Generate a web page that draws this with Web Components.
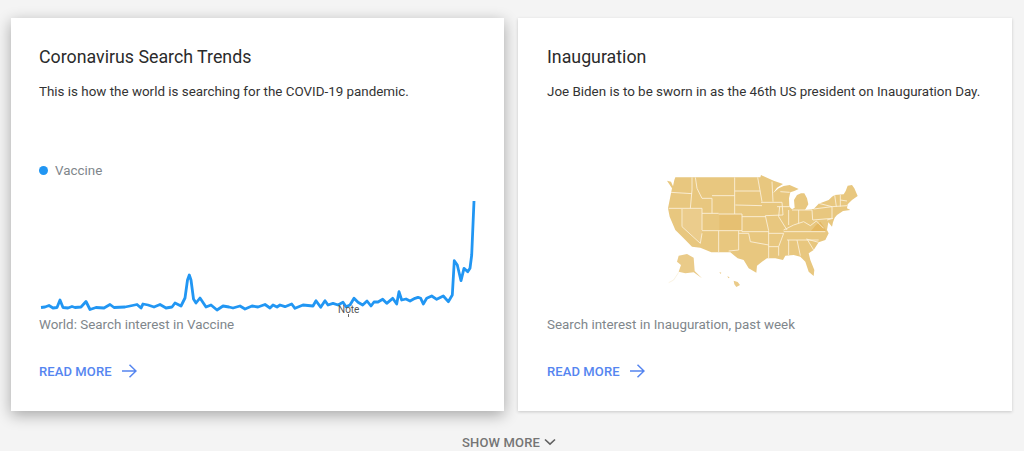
<!DOCTYPE html>
<html lang="en">
<head>
<meta charset="utf-8">
<title>Trends</title>
<style>
  html, body { margin: 0; height: 451px; overflow: hidden; background: #f4f4f4; font-family: Roboto, "Liberation Sans", sans-serif; }
</style>
</head>
<body>
<story-page>
  <story-card raised>
    <span slot="title">Coronavirus Search Trends</span>
    <span slot="desc">This is how the world is searching for the COVID-19 pandemic.</span>
    <trend-chart term="Vaccine"></trend-chart>
    <span slot="caption">World: Search interest in Vaccine</span>
  </story-card>
  <story-card>
    <span slot="title">Inauguration</span>
    <span slot="desc">Joe Biden is to be sworn in as the 46th US president on Inauguration Day.</span>
    <us-map></us-map>
    <span slot="caption">Search interest in Inauguration, past week</span>
  </story-card>
</story-page>
<script>
class StoryPage extends HTMLElement {
    constructor() {
        super();
        this.attachShadow({ mode: 'open' });
        this.shadowRoot.innerHTML = `
            <style>
                :host { display: block; padding: 18px 12px 0 11px; }
                .cards { display: grid; grid-template-columns: 493px 494px; column-gap: 14px; }
                .more {
                    display: flex;
                    justify-content: center;
                    align-items: center;
                    gap: 4px;
                    margin-top: 21px;
                    padding-right: 5px;
                    height: 20px;
                    font-size: 13px;
                    font-weight: 500;
                    letter-spacing: 0.15px;
                    color: #757575;
                }
            </style>
            <div class="cards"><slot></slot></div>
            <div class="more">SHOW MORE
                <svg width="12" height="8" viewBox="0 0 12 8"><path d="M1 1.5 6 6.2 11 1.5" fill="none" stroke="#616161" stroke-width="1.6"/></svg>
            </div>
        `;
    }
}
customElements.define('story-page', StoryPage);

class StoryCard extends HTMLElement {
    constructor() {
        super();
        this.attachShadow({ mode: 'open' });
        this.shadowRoot.innerHTML = `
            <style>
                :host {
                    display: flex;
                    flex-direction: column;
                    box-sizing: border-box;
                    height: 393px;
                    padding: 28px 28px 30px 29px;
                    background: #fff;
                    box-shadow: 0 1px 3px rgba(0,0,0,0.18);
                }
                :host([raised]) { padding-left: 28px; box-shadow: 0 4px 14px rgba(0,0,0,0.32); }
                .title { font-size: 17.8px; line-height: 22px; color: #2b2b2b; }
                .desc { margin-top: 14px; font-size: 13.4px; line-height: 20px; color: #333; white-space: nowrap; }
                .visual { flex: 1; min-height: 0; }
                .caption { font-size: 13.4px; line-height: 20px; color: #80868b; }
                .read {
                    display: flex;
                    align-items: center;
                    gap: 10px;
                    margin-top: 26px;
                    height: 20px;
                    font-size: 13px;
                    font-weight: 500;
                    letter-spacing: 0.1px;
                    color: #5585f0;
                }
            </style>
            <div class="title"><slot name="title"></slot></div>
            <div class="desc"><slot name="desc"></slot></div>
            <div class="visual"><slot></slot></div>
            <div class="caption"><slot name="caption"></slot></div>
            <div class="read">READ MORE
                <svg width="15" height="14" viewBox="0 0 15 14"><path d="M0 7H14M7.5 0.7 14 7 7.5 13.3" fill="none" stroke="#5585f0" stroke-width="1.5"/></svg>
            </div>
        `;
    }
}
customElements.define('story-card', StoryCard);

const SERIES = [
    [41,307.5],[45,307],[49,305.5],[53,308],[57,307.5],[60,300],[63,307.5],[68,308],[72,306.5],[75,307.5],
    [81,307],[86,301.5],[90,309.5],[96,307.5],[104,308],[110,304.5],[114,307.5],[125,307],[130,306],[137,304.5],
    [141,308],[143,304],[148,305],[154,307],[160,304.5],[166,308],[172,307],[175,303],[181,306],[185,298],
    [187.5,280],[189.3,275],[191,280],[193.5,299],[196,303],[200,298],[206,307],[211,305],[217,310],[223,306],[229,307],
    [233,308],[240,306],[245,309],[252,306],[258,307],[265,304.5],[270,308],[273,305],[277,307],[280,305],
    [285,306.7],[291.7,304],[295,308.3],[303,305],[313,306],[316,300.7],[320.7,307.3],[325,300.7],[328,305],[333,303.3],
    [338,305],[343,302.3],[346,306.7],[350,305],[354,298.3],[358,302.3],[362.7,305],[367,301],[371,306],[374,302],
    [378,302],[382.7,299.3],[386.7,303.3],[392.7,298.3],[396.7,304],[399,291.7],[401.7,300],[406,299],[410,301],[415,298.3],
    [418,297.3],[420.7,298.3],[423.3,304],[426.7,298.3],[431.7,296],[436.7,299.3],[443.3,296],[448.3,301.7],[452.3,295],
    [454.3,260.7],[457.3,265],[461,280.7],[464,268.3],[467.7,271.7],[470,268.3],[471.7,255],[474,201]
];

class TrendChart extends HTMLElement {
    constructor() {
        super();
        this.attachShadow({ mode: 'open' });
        const pts = SERIES.map(p => p.join(',')).join(' ');
        this.shadowRoot.innerHTML = `
            <style>
                :host { display: block; padding-top: 58px; }
                .legend { display: flex; align-items: center; gap: 7px; height: 20px; font-size: 13.4px; color: #80868b; }
                .dot { width: 9px; height: 9px; border-radius: 50%; background: #2196f3; }
                svg { display: block; overflow: visible; }
                text { font: 10px Roboto, "Liberation Sans", sans-serif; fill: #555; }
            </style>
            <div class="legend"><span class="dot"></span><span>${this.getAttribute('term')}</span></div>
            <svg width="438" height="135" viewBox="39 180 438 135">
                <polyline points="${pts}" fill="none" stroke="#2196f3" stroke-width="2.8" stroke-linejoin="round"/>
                <text x="338" y="313">Note</text>
                <path d="M348.5 314V317" stroke="#666" stroke-width="1"/>
            </svg>
        `;
    }
}
customElements.define('trend-chart', TrendChart);

class UsMap extends HTMLElement {
    constructor() {
        super();
        this.attachShadow({ mode: 'open' });
        this.shadowRoot.innerHTML = `
            <style>
                :host { display: flex; justify-content: center; padding-top: 63px; }
                svg { display: block; }
            </style>
            <svg width="220" height="130" viewBox="17 0 660 390">
                <path fill="#e8c77f" d="M50 47 62 50 68 64 72 45 75 37H330L332 30 345 36 370 47 398 57 380 68 368 85 385 70 400 63 418 60 445 72 432 78 420 82 416 100 417 125 425 133 433 128 431 105 440 90 452 85H462L470 100 474 118 464 135 490 132 505 116 535 105 545 95 553 90 580 88 586 78 592 62 605 60 612 70 622 93 605 105 592 118 590 130 600 135 578 138 560 150 553 158 548 172 545 185 534 172 530 195 535 205 525 225 505 232 490 255 475 265 480 285 492 315 490 333 475 320 465 290 450 275 430 270 405 272 398 285 375 280H350L335 290 320 302 318 323 295 310 280 285 262 280 240 262H183L150 248 125 245 100 220 75 195 58 155 53 130 62 85 65 70Z"/>
                <path fill="#e6c072" d="M207 148H274V196H207Z"/>
                <path fill="#e4b862" d="M482 198 497 180 510 170 525 192 526 198Z"/>
                <path fill="#ebcc8c" d="M97 133H155V205L150 232 97 185Z"/>
                <path fill="#eacb89" d="M85 272 110 267 130 278 133 318 155 340 130 322 105 325 85 320 92 300 80 290ZM207 321 213 323 211 327ZM231 334 238 337 234 340ZM250 347 262 351 269 360 258 366 252 358Z"/>
                <path fill="none" stroke="#eacb89" stroke-width="1.2" opacity="0.6" d="M85 322 70 345 55 353"/>
                <path fill="none" stroke="#fbf1dc" stroke-width="2.6" d="
                    M62 82 125 86M125 37V75L120 130M55 130H155M95 132V185L150 235 155 205M155 130V195
                    M135 37 140 70 155 100H185V145M155 145H205M155 197H275M205 147H275V197
                    M253 37V147M185 92H253M253 78H330M255 120 335 122M275 155H345M275 197V200H355
                    M205 197V262M265 197V255L235 258M265 205H295L300 230 355 240
                    M322 37 335 110M332 112H395L398 150 345 152M365 50 368 110M380 125H417M390 80 418 82
                    M388 125 385 155 410 195M415 135V180M445 135V175M425 135 485 135 487 165
                    M345 152 355 197V280M355 205H400L385 245H355M385 245V272M400 200H525
                    M400 195 430 180 460 170 480 182 498 168 520 190M410 225H505
                    M415 225V270M440 225 450 272M470 222 490 255M468 222 505 232
                    M490 132 545 125V160L488 165M505 115 545 125M553 90 558 125M570 90 570 125
                    M545 125 590 122M570 105 590 108M530 165 548 160"/>
            </svg>
        `;
    }
}
customElements.define('us-map', UsMap);
</script>
</body>
</html>
